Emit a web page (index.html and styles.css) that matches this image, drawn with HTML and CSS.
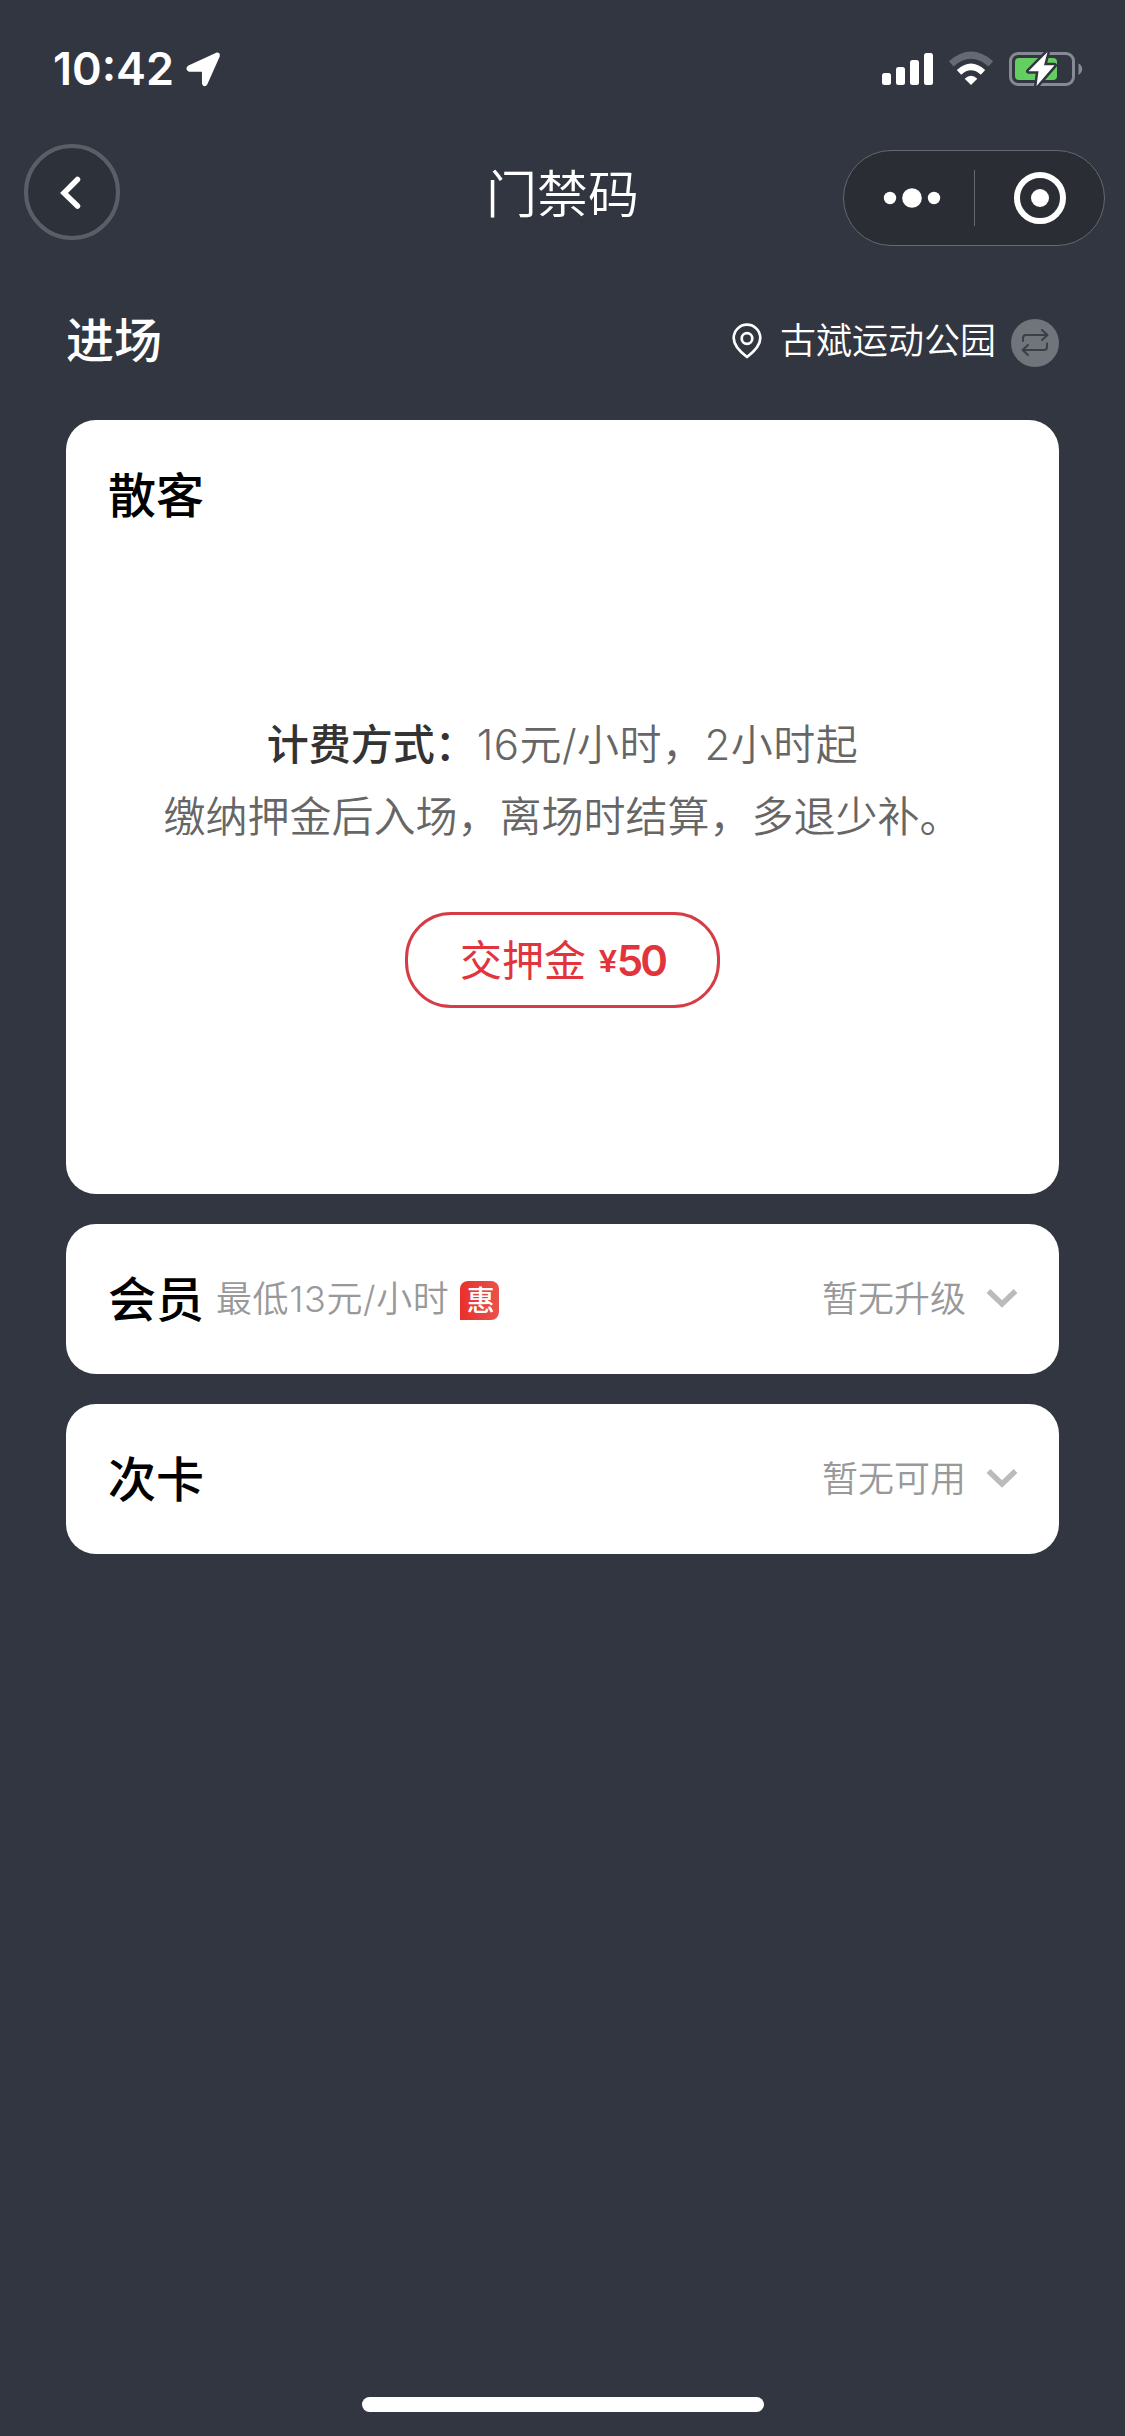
FILE: index.html
```html
<!DOCTYPE html>
<html lang="zh-CN">
<head>
<meta charset="utf-8">
<title>门禁码</title>
<link rel="stylesheet" href="styles.css">
</head>
<body>
<div class="screen">
  <header class="status">
    <span class="time">10:42</span>
    <svg class="location" width="37" height="37" viewBox="0 0 36 36"><path d="M4 15.500L30.500 3.200Q33 2.500 32.300 5L20.500 31.500Q19 34 18 31.500V18.700H4.500Q1.500 17.500 4 15.500Z" fill="#fff" stroke="#fff" stroke-width="3" stroke-linejoin="round"/></svg>
    <svg class="indicators" width="204" height="38" viewBox="0 0 204 38">
      <g fill="#fff">
        <rect x="2" y="23" width="9" height="12" rx="2.500"/>
        <rect x="16" y="17" width="9" height="18" rx="2.500"/>
        <rect x="30" y="10" width="9" height="25" rx="2.500"/>
        <rect x="44" y="3" width="9" height="32" rx="2.500"/>
        <path d="M91 35L84.700 28.700Q91 22.900 97.300 28.700Z"/>
      </g>
      <path d="M71.200 13.800Q91 -3.600 110.800 13.800" fill="none" stroke="#666971" stroke-width="7"/>
      <path d="M79 22.300Q91 11.300 103 22.300" fill="none" stroke="#fff" stroke-width="6.500"/>
      <rect x="130.500" y="3.500" width="63" height="31" rx="7.500" fill="none" stroke="#878a92" stroke-width="3"/>
      <path d="M198.500 13.500Q202.200 15.500 202.200 19T198.500 25Z" fill="#878a92"/>
      <rect x="135" y="8" width="42" height="22" rx="4" fill="#63cf61"/>
      <path d="M167.500 2L148.500 21.200H158.500L156.500 36L174.500 15.300H164Z" fill="#fff" stroke="#323640" stroke-width="5" stroke-linejoin="round" paint-order="stroke"/>
    </svg>
  </header>

  <nav class="nav">
    <button class="back" aria-label="返回"><svg width="24" height="36" viewBox="0 0 24 36"><path d="M18.500 4.500L5 18L18.500 31" fill="none" stroke="#fff" stroke-width="5.500" stroke-linecap="round" stroke-linejoin="miter"/></svg></button>
    <h1 class="title">门禁码</h1>
    <div class="capsule">
      <svg width="58" height="20" viewBox="0 0 58 20" fill="#fff"><circle cx="7" cy="10" r="6.200"/><circle cx="29" cy="10" r="9.800"/><circle cx="51" cy="10" r="6.200"/></svg>
      <span class="divider"></span>
      <svg width="54" height="54" viewBox="0 0 54 54"><circle cx="27" cy="27" r="23" fill="none" stroke="#fff" stroke-width="6"/><circle cx="27" cy="27" r="9" fill="#fff"/></svg>
    </div>
  </nav>

  <main class="content">
    <div class="heading">
      <h2 class="name light">进场</h2>
      <svg class="pin" width="30" height="36" viewBox="0 0 30 36" fill="none" stroke="#fff" stroke-width="2.700" stroke-linejoin="round"><path d="M15 34Q1.700 24 1.700 15A13.300 13.300 0 0 1 28.300 15Q28.300 24 15 34Z"/><circle cx="15" cy="15.500" r="5.300"/></svg>
      <span class="place">古斌运动公园</span>
      <svg class="swap" width="48" height="48" viewBox="0 0 48 48"><circle cx="24" cy="24" r="24" fill="#70747b"/><path d="M12 22V19Q12 16 15 16H36M31 11L36.500 16L31 21M36 24.500V28Q36 31 33 31H12M17 26L11.500 31L17 36" fill="none" stroke="#3b3f48" stroke-width="2" stroke-linecap="round" stroke-linejoin="round"/></svg>
    </div>

    <section class="card guest">
      <h2 class="name">散客</h2>
      <div class="terms">
        <p><strong>计费方式：</strong><span class="rate">16元/小时，2小时起</span></p>
        <p>缴纳押金后入场，离场时结算，多退少补。</p>
      </div>
      <button class="deposit"><span class="action">交押金</span><span class="yen">¥</span><span class="amount">50</span></button>
    </section>

    <section class="card option">
      <h2 class="name">会员</h2>
      <span class="note">最低13元/小时</span>
      <span class="badge">惠</span>
      <span class="state">暂无升级</span>
      <svg width="34" height="24" viewBox="0 0 34 24"><path d="M3.500 4L17 17L30.500 4" fill="none" stroke="#bbb" stroke-width="5.500"/></svg>
    </section>

    <section class="card option">
      <h2 class="name">次卡</h2>
      <span class="state">暂无可用</span>
      <svg width="34" height="24" viewBox="0 0 34 24"><path d="M3.500 4L17 17L30.500 4" fill="none" stroke="#bbb" stroke-width="5.500"/></svg>
    </section>
  </main>

  <footer class="home"><span class="home-bar"></span></footer>
</div>
</body>
</html>
```
FILE: styles.css
```css
* { box-sizing: border-box; margin: 0; padding: 0; }

body {
  background: #323640;
  font-family: Inter, "Noto Sans CJK SC", sans-serif;
}

button { font: inherit; }
svg { display: block; flex: none; }

.screen {
  display: flex;
  flex-direction: column;
  width: 1125px;
  height: 2436px;
  overflow: hidden;
}

.status {
  display: flex;
  align-items: center;
  height: 138px;
  padding: 0 41px 0 53px;
}
.time {
  width: 132px;
  font-size: 45px;
  font-weight: 600;
  line-height: 54px;
  color: #fff;
}
.location { margin-top: 1px; }
.indicators { margin-left: auto; }

.nav {
  display: grid;
  grid-template-columns: 262px 1fr 262px;
  align-items: start;
  height: 150px;
  padding: 6px 20px 0 24px;
}
.back {
  display: flex;
  align-items: center;
  justify-content: center;
  width: 96px;
  height: 96px;
  padding: 2px 2px 0 0;
  border: 4px solid #5b5e67;
  border-radius: 50%;
  background: #2d3139;
}
.title {
  padding-right: 4px;
  font-size: 51px;
  font-weight: 350;
  line-height: 101px;
  text-align: center;
  color: #fff;
}
.capsule {
  display: flex;
  align-items: center;
  height: 96px;
  margin-top: 6px;
  padding: 0 37px 0 39px;
  border: 1px solid #666870;
  border-radius: 48px;
  background: #2b2d35;
}
.divider {
  width: 1px;
  height: 56px;
  margin: 0 38px 0 33px;
  background: #666870;
}

.content {
  display: flex;
  flex-direction: column;
  gap: 30px;
  padding: 0 66px;
}
.heading {
  display: flex;
  align-items: center;
  height: 102px;
  color: #fff;
}
.name {
  padding-top: 1px;
  font-size: 48px;
  font-weight: 500;
  line-height: 60px;
  color: #000;
}
.light { padding-top: 4px; color: #fff; }
.pin { margin: 3px 18px 0 auto; }
.place {
  padding-top: 3px;
  font-size: 36px;
  font-weight: 350;
  line-height: 48px;
}
.swap { margin: 8px 0 0 15px; }

.card { border-radius: 30px; background: #fff; }
.guest {
  display: flex;
  flex-direction: column;
  align-items: center;
  height: 774px;
  padding-top: 45px;
}
.guest .name { align-self: flex-start; padding-left: 42px; }
.terms {
  margin-top: 183px;
  font-size: 42px;
  font-weight: 350;
  line-height: 72px;
  text-align: center;
  color: #666;
}
.terms strong { font-weight: 500; color: #333; }
.rate { letter-spacing: 0.5px; }
.deposit {
  display: flex;
  align-items: center;
  justify-content: center;
  width: 315px;
  height: 96px;
  margin-top: 59px;
  border: 3px solid #d63c46;
  border-radius: 46px;
  background: #fff;
  font-size: 42px;
  color: #e1343c;
}
.action { padding-bottom: 6px; }
.yen {
  margin: 2px 0 0 13px;
  font-family: "Liberation Sans", sans-serif;
  font-size: 32px;
  font-weight: 700;
}
.amount {
  font-size: 42px;
  font-weight: 600;
  letter-spacing: -3px;
}

.option {
  display: flex;
  align-items: center;
  height: 150px;
  padding: 0 40px 0 42px;
}
.note {
  margin-left: 12px;
  padding-bottom: 7px;
  font-size: 36px;
  font-weight: 350;
  letter-spacing: 0.6px;
  color: #999;
}
.badge {
  width: 39px;
  height: 39px;
  margin: 2px 0 0 11px;
  padding-left: 2px;
  border-radius: 8px 8px 8px 0;
  background: linear-gradient(90deg, #e9302b, #e9524c);
  font-size: 28px;
  font-weight: 500;
  line-height: 40px;
  text-align: center;
  color: #fff;
}
.state {
  margin: 0 19px 0 auto;
  padding-bottom: 7px;
  font-size: 36px;
  font-weight: 350;
  color: #999;
}

.home {
  display: flex;
  justify-content: center;
  margin-top: auto;
  padding-bottom: 24px;
}
.home-bar {
  width: 402px;
  height: 15px;
  border-radius: 8px;
  background: #fff;
}
```
